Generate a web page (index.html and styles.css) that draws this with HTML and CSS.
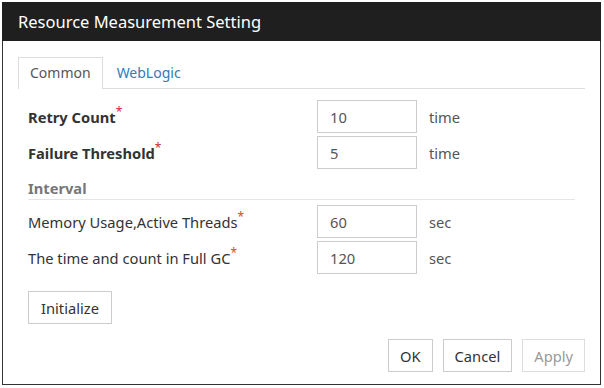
FILE: index.html
```html
<html>
<head>
	<link rel="stylesheet" href="styles.css">
</head>
<body>
	<div class='dialog'>
		<div class='dialog-title'>Resource Measurement Setting</div>
		<div class='dialog-body'>
			<div class='tabs'>
				<div class='tab active'>Common</div>
				<div class='tab'>WebLogic</div>
			</div>
			<div class='tab-pane'>
				<div class='row'>
					<label class='label strong'>Retry Count<span class='req'>*</span></label>
					<input class='field' value='10'>
					<span class='unit'>time</span>
				</div>
				<div class='row'>
					<label class='label strong'>Failure Threshold<span class='req'>*</span></label>
					<input class='field' value='5'>
					<span class='unit'>time</span>
				</div>
				<div class='section'>Interval</div>
				<div class='row'>
					<label class='label'>Memory Usage,Active Threads<span class='req alt'>*</span></label>
					<input class='field' value='60'>
					<span class='unit'>sec</span>
				</div>
				<div class='row'>
					<label class='label'>The time and count in Full GC<span class='req alt'>*</span></label>
					<input class='field' value='120'>
					<span class='unit'>sec</span>
				</div>
				<button class='btn init'>Initialize</button>
			</div>
			<div class='footer'>
				<button class='btn'>OK</button>
				<button class='btn'>Cancel</button>
				<button class='btn' disabled>Apply</button>
			</div>
		</div>
	</div>
</body>
</html>
```

FILE: styles.css
```css
body {
	margin: 0;
	padding: 2px 0 0 2px;
	font-family: 'Noto Sans', sans-serif;
	font-size: 14.7px;
	color: #333;
	background: #fff;
}

.dialog {
	width: 597px;
	border: 1px solid #333;
	border-top: none;
	background: #fff;
}

.dialog-title {
	height: 39px;
	display: flex;
	align-items: center;
	padding-left: 16px;
	background: #1f1f1f;
	color: #fff;
	font-size: 16.5px;
	margin: 0 -1px;
}

.dialog-body {
	padding: 16px 15px 12px 15px;
}

.tabs {
	display: flex;
	border-bottom: 1px solid #ddd;
	height: 31px;
}

.tab {
	padding: 0 11px;
	line-height: 30px;
	font-size: 14px;
	color: #337ab7;
	border: 1px solid transparent;
	border-bottom: none;
	margin-right: 2px;
}

.tab.active {
	color: #555;
	border-color: #ddd;
	background: #fff;
	height: 31px;
}

.tab-pane {
	padding: 11px 10px 0 10px;
}

.row {
	display: flex;
	align-items: center;
	margin-bottom: 3px;
}

.label {
	width: 289px;
}

.strong {
	font-weight: bold;
}

.req {
	color: #d01f45;
	font-size: 12px;
	vertical-align: top;
	position: relative;
	top: -4px;
	font-weight: normal;
}

.req.alt {
	color: #d9472b;
}

.field {
	width: 100px;
	height: 33px;
	box-sizing: border-box;
	border: 1px solid #ccc;
	padding: 0 12px;
	font: inherit;
	color: #555;
	margin: 0;
}

.unit {
	margin-left: 12px;
	color: #555;
}

.section {
	margin: 9px 0 5px 0;
	line-height: 21px;
	border-bottom: 1px solid #e5e5e5;
	color: #777;
	font-weight: bold;
}

.btn {
	height: 33px;
	box-sizing: border-box;
	border: 1px solid #ccc;
	background: #fff;
	font: inherit;
	color: #333;
	padding: 0 12px;
	margin: 0;
}

.btn:disabled {
	color: #999;
	border-color: #ddd;
}

.init {
	margin-top: 14px;
}

.footer {
	display: flex;
	justify-content: flex-end;
	gap: 10px;
	margin-top: 15px;
}

.footer .btn {
	padding: 0 11px;
}
```
